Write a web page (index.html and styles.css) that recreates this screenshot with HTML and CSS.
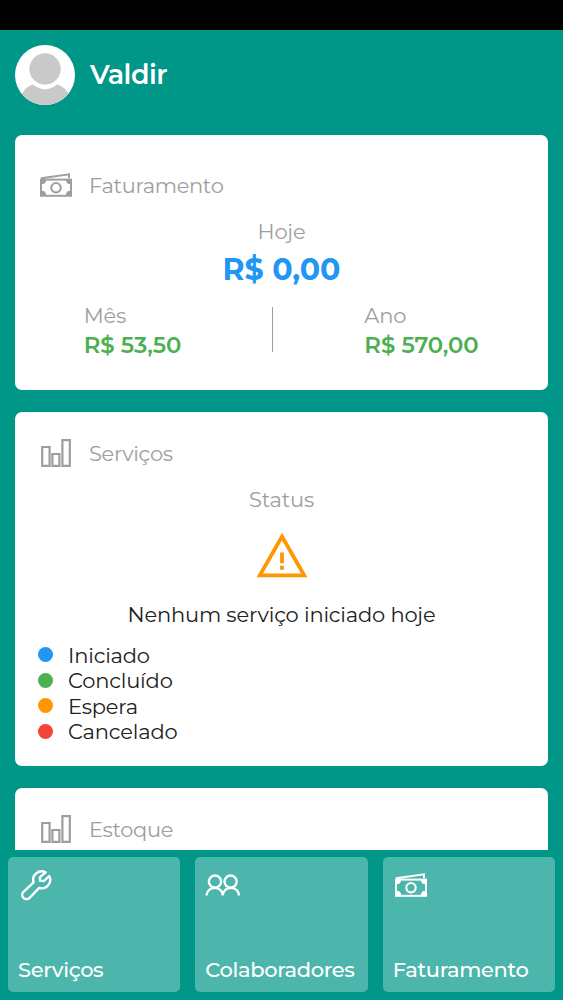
FILE: index.html
```html
<!DOCTYPE html>
<html lang="pt-BR">
<head>
    <meta charset="UTF-8">
    <meta name="viewport" content="width=device-width, initial-scale=1.0">
    <title>Valdir</title>
    <link rel="stylesheet" href="styles.css">
</head>
<body>
    <svg class="symbols" aria-hidden="true">
        <symbol id="money" viewBox="0 0 32 24">
            <path d="M1 5.2 L29 1.3 V5" fill="none" stroke="currentColor" stroke-width="2"/>
            <rect x="1" y="6.6" width="30" height="16.2" fill="none" stroke="currentColor" stroke-width="2"/>
            <path d="M2 7h4v1.6L4 11H2zM30 7h-4v1.6l2 2.4H30zM2 22h4v-1.6L4 18H2zM30 22h-4v-1.6l2-2.4H30z" fill="currentColor"/>
            <circle cx="16" cy="14.7" r="4.7" fill="none" stroke="currentColor" stroke-width="2.1"/>
        </symbol>
        <symbol id="bars" viewBox="0 0 30 28">
            <path d="M1.2 8h7.4v18.8H1.2zM11.4 15h7v11.8h-7zM21.4 1.2h7.4v25.6h-7.4z" fill="none" stroke="currentColor" stroke-width="2.2"/>
        </symbol>
    </svg>

    <div class="status-bar"></div>

    <header class="header">
        <svg class="avatar" viewBox="0 0 60 60">
            <clipPath id="round"><circle cx="30" cy="30" r="30"/></clipPath>
            <g clip-path="url(#round)">
                <rect width="60" height="60" fill="#fff"/>
                <path d="M5 53Q10 41 18 39.5Q30 49 42 39.5Q50 41 56 53V60H5z" fill="#c9c9c9"/>
                <circle cx="30" cy="24" r="15.7" fill="#c9c9c9"/>
            </g>
        </svg>
        <h1 class="name">Valdir</h1>
    </header>

    <main class="content">
        <section class="card card-billing">
            <div class="card-head">
                <svg class="icon icon-money"><use href="#money"/></svg>
                <h2>Faturamento</h2>
            </div>
            <p class="label center">Hoje</p>
            <p class="today">R$ 0,00</p>
            <div class="totals">
                <div class="month">
                    <p class="label">Mês</p>
                    <p class="value">R$ 53,50</p>
                </div>
                <div class="divider"></div>
                <div class="year">
                    <p class="label">Ano</p>
                    <p class="value">R$ 570,00</p>
                </div>
            </div>
        </section>

        <section class="card card-services">
            <div class="card-head">
                <svg class="icon icon-bars"><use href="#bars"/></svg>
                <h2>Serviços</h2>
            </div>
            <p class="label center">Status</p>
            <svg class="warning" viewBox="0 0 52 46">
                <path d="M26 4.5 L48.2 43.4 H3.8z" fill="none" stroke="#ff9800" stroke-width="3.8"/>
                <path d="M26 20.5v10.8M26 33.7v4" fill="none" stroke="#ff9800" stroke-width="3.8"/>
            </svg>
            <p class="message">Nenhum serviço iniciado hoje</p>
            <ul class="legend">
                <li>Iniciado</li>
                <li class="done">Concluído</li>
                <li class="waiting">Espera</li>
                <li class="canceled">Cancelado</li>
            </ul>
        </section>

        <section class="card card-stock">
            <div class="card-head">
                <svg class="icon icon-bars"><use href="#bars"/></svg>
                <h2>Estoque</h2>
            </div>
        </section>
    </main>

    <nav class="menu">
        <a class="tile">
            <svg class="tile-icon" viewBox="0 0 36 32">
                <path d="M27.6 3.4 A8.4 8.4 0 0 0 15.6 13.4 L5.5 22.8 A4.3 4.3 0 0 0 11.6 28.9 L21.2 18.9 A8.4 8.4 0 0 0 31.2 7 L26 12 L21.9 11.6 L22 8.2z" fill="none" stroke="currentColor" stroke-width="2.4" stroke-linejoin="round"/>
            </svg>
            <span>Serviços</span>
        </a>
        <a class="tile">
            <svg class="tile-icon" viewBox="0 0 36 32">
                <g fill="none" stroke="currentColor" stroke-width="2.4">
                    <circle cx="10" cy="12.6" r="6.1"/>
                    <circle cx="25.6" cy="12.6" r="6.1"/>
                    <path d="M1.6 26.6A8.1 7.9 0 0 1 17.8 26.6A8.1 7.9 0 0 1 34 26.6"/>
                </g>
            </svg>
            <span>Colaboradores</span>
        </a>
        <a class="tile">
            <svg class="tile-icon tile-money"><use href="#money"/></svg>
            <span>Faturamento</span>
        </a>
    </nav>
</body>
</html>
```
FILE: styles.css
```css
* {
    box-sizing: border-box;
    margin: 0;
    padding: 0;
}
body {
    height: 1000px;
    display: flex;
    flex-direction: column;
    overflow: hidden;
    background: #009688;
    color: #212121;
    font-family: Montserrat, Inter, sans-serif;
    font-size: 21px;
    line-height: 26px;
    letter-spacing: -0.18px;
    white-space: nowrap;
}
.symbols {
    position: absolute;
    width: 0;
    height: 0;
}
.status-bar {
    flex: none;
    height: 30px;
    background: #000;
}
.header {
    flex: none;
    height: 105px;
    padding: 0 15px 15px;
    display: flex;
    align-items: center;
    gap: 15px;
}
.avatar {
    width: 60px;
    height: 60px;
}
.name {
    color: #fff;
    font-size: 27px;
    font-weight: 600;
    letter-spacing: -0.5px;
}
.content {
    height: 715px;
    flex: none;
    padding: 0 15px;
    overflow: hidden;
}
.card {
    background: #fff;
    border-radius: 7px;
    padding: 0 23px;
    margin-bottom: 22px;
}
.card-billing {
    height: 255px;
    padding-top: 38px;
}
.card-services {
    height: 354px;
    padding-top: 29px;
}
.card-stock {
    height: 200px;
    padding-top: 29px;
}
.card-head {
    height: 26px;
    display: flex;
    align-items: center;
    padding-left: 2px;
    margin-bottom: 20px;
    color: #9e9e9e;
}
.card-head h2 {
    font-size: 21px;
    font-weight: 400;
    letter-spacing: -0.35px;
}
.icon {
    flex: none;
}
.icon-money {
    width: 32px;
    height: 24px;
    margin: 0 17px 2px 0;
}
.icon-bars {
    width: 30px;
    height: 28px;
    margin: 0 18px 2px 1px;
}
.label {
    color: #9e9e9e;
}
.center {
    text-align: center;
}
.today {
    height: 38px;
    line-height: 38px;
    margin: 6px 0 14px;
    text-align: center;
    font-size: 30px;
    font-weight: 700;
    letter-spacing: 0;
    color: #2196f3;
}
.totals {
    display: flex;
    justify-content: space-around;
}
.month {
    width: 97px;
}
.year {
    width: 115px;
}
.divider {
    width: 1px;
    height: 45px;
    margin-top: 4px;
    background: #9e9e9e;
}
.value {
    margin-top: 3px;
    font-size: 22.8px;
    font-weight: 600;
    letter-spacing: -0.05px;
    color: #4caf50;
}
.warning {
    display: block;
    width: 52px;
    height: 46px;
    margin: 19px auto 24px;
}
.message {
    text-align: center;
}
.legend {
    list-style: none;
    margin-top: 15px;
}
.legend li {
    height: 25.5px;
    display: flex;
    align-items: center;
}
.legend li::before {
    content: "";
    width: 15px;
    height: 15px;
    margin: 0 15px 2px 0;
    border-radius: 50%;
    background: #2196f3;
}
.legend .done::before {
    background: #4caf50;
}
.legend .waiting::before {
    background: #ff9800;
}
.legend .canceled::before {
    background: #f44336;
}
.menu {
    height: 150px;
    padding: 7px 8px 8px;
    display: grid;
    grid-template-columns: repeat(3, 1fr);
    gap: 15px;
}
.tile {
    display: flex;
    flex-direction: column;
    justify-content: space-between;
    min-width: 0;
    padding: 12px 10px 9px;
    border-radius: 5px;
    background: #4db6ac;
    color: #fff;
    font-weight: 500;
    letter-spacing: -0.35px;
}
.tile-icon {
    width: 36px;
    height: 32px;
}
.tile-money {
    width: 32px;
    height: 24px;
    margin: 4px 0 0 2px;
}
```
